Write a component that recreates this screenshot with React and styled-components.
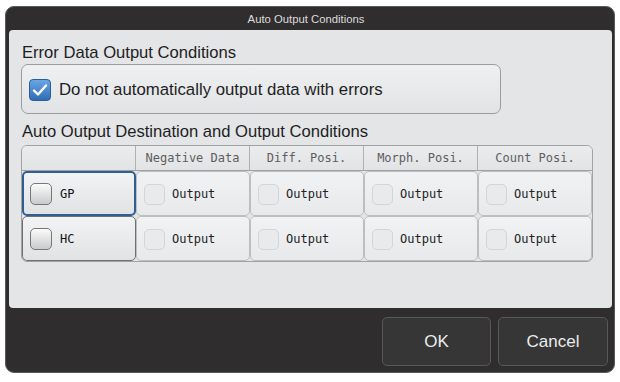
import React from 'react'
import styled, { createGlobalStyle } from 'styled-components'

const GlobalStyle = createGlobalStyle`
  html, body {
    margin: 0;
    padding: 0;
    background: #ffffff;
  }
  body {
    font-family: "Liberation Sans", Arial, sans-serif;
  }
`

const Dialog = styled.div`
  box-sizing: border-box;
  margin: 6px 0 0 5px;
  width: 610px;
  height: 367px;
  background: #2f2d2e;
  border: 1px solid #5a5a5a;
  border-radius: 9px;
  display: flex;
  flex-direction: column;
  overflow: hidden;
`

const TitleBar = styled.div`
  height: 23px;
  flex: none;
  display: flex;
  align-items: center;
  justify-content: center;
  padding-right: 8px;
  color: #dcdcdc;
  font-size: 11.3px;
`

const Panel = styled.div`
  box-sizing: border-box;
  height: 278px;
  flex: none;
  margin: 0 2px 0 3px;
  padding: 14px 0 0 12px;
  background: #e4e5e7;
  border-radius: 4px;
`

const Heading = styled.h2`
  margin: ${p => p.$top || 0}px 0 0 1px;
  font-size: 16.6px;
  line-height: 18px;
  font-weight: normal;
  color: #1e1e1e;
`

const OptionBox = styled.div`
  box-sizing: border-box;
  margin-top: 2px;
  width: 480px;
  height: 50px;
  display: flex;
  align-items: center;
  gap: 8px;
  padding: 2px 0 0 7px;
  border: 1px solid #9c9c9c;
  border-radius: 7px;
  background: linear-gradient(#eef0f2, #e1e3e5);
  font-size: 16.8px;
  color: #1e1e1e;
`

const Checked = styled.span`
  box-sizing: border-box;
  width: 22px;
  height: 22px;
  display: flex;
  align-items: center;
  justify-content: center;
  border: 1px solid #2b5c93;
  border-radius: 4px;
  background: linear-gradient(#6aa6e6, #2f6db3);
`

const Box = styled.span`
  box-sizing: border-box;
  flex: none;
  width: ${p => (p.$disabled ? 21 : 22)}px;
  height: ${p => (p.$disabled ? 21 : 22)}px;
  border-radius: 5px;
  border: 1px solid ${p => (p.$disabled ? '#d4d5d6' : '#777777')};
  background: ${p =>
    p.$disabled ? '#e9eaeb' : 'linear-gradient(#fbfbfb, #c9cacb)'};
`

const Table = styled.div`
  box-sizing: border-box;
  margin-top: 4px;
  width: 572px;
  border: 1px solid #a2a2a2;
  border-radius: 6px;
  overflow: hidden;
  display: grid;
  grid-template-columns: repeat(5, 1fr);
  grid-template-rows: 25px 45px 45px;
  font-family: "DejaVu Sans Mono", "Liberation Mono", monospace;
  font-size: 12px;
`

const HeadCell = styled.div`
  display: flex;
  align-items: center;
  justify-content: center;
  color: #5e5e5e;
  background: linear-gradient(#ebecee, #e2e3e5);
  border-right: 1px solid #b0b0b0;
  border-bottom: 1px solid #a2a2a2;
  &:nth-child(5) {
    border-right: none;
  }
`

const Cell = styled.div`
  box-sizing: border-box;
  display: flex;
  align-items: center;
  padding-top: 1px;
  gap: ${p => (p.$dest ? 8 : 7)}px;
  color: ${p => (p.$dest ? '#111111' : '#222222')};
  border-radius: 5px;
  border: ${p => (p.$focus ? '2px solid #2d5f95' : `1px solid ${p.$dest ? '#707070' : '#bdbebf'}`)};
  padding-left: ${p => (p.$focus ? 6 : 7)}px;
  background: ${p =>
    p.$dest ? 'linear-gradient(#f2f3f4, #e1e2e4)' : 'linear-gradient(#f1f2f3, #e8e9eb)'};
`

const Footer = styled.div`
  flex: 1;
  display: flex;
  justify-content: flex-end;
  align-items: flex-start;
  gap: 7px;
  padding: 9px 6px 0 0;
`

const Button = styled.button`
  box-sizing: border-box;
  width: ${p => p.$w}px;
  height: 49px;
  background: #363636;
  border: 1px solid #585858;
  border-radius: 5px;
  color: #ececec;
  font-family: "Liberation Sans", Arial, sans-serif;
  font-size: 17px;
  padding: 0;
`

const columns = ['', 'Negative Data', 'Diff. Posi.', 'Morph. Posi.', 'Count Posi.']
const rows = ['GP', 'HC']

export default function App() {
  return (
    <>
      <GlobalStyle />
      <Dialog>
        <TitleBar>Auto Output Conditions</TitleBar>
        <Panel>
          <Heading>Error Data Output Conditions</Heading>
          <OptionBox>
            <Checked>
              <svg width="16" height="14" viewBox="0 0 16 14">
                <path d="M2 7.5 L6 11.5 L14 2.5" fill="none" stroke="#fff" strokeWidth="2.4" strokeLinecap="round" strokeLinejoin="round" />
              </svg>
            </Checked>
            Do not automatically output data with errors
          </OptionBox>
          <Heading $top={9}>Auto Output Destination and Output Conditions</Heading>
          <Table>
            {columns.map((c, i) => (
              <HeadCell key={i}>{c}</HeadCell>
            ))}
            {rows.map((r, ri) => (
              <React.Fragment key={r}>
                <Cell $dest $focus={ri === 0}>
                  <Box />
                  {r}
                </Cell>
                {columns.slice(1).map(c => (
                  <Cell key={c}>
                    <Box $disabled />
                    Output
                  </Cell>
                ))}
              </React.Fragment>
            ))}
          </Table>
        </Panel>
        <Footer>
          <Button $w={109}>OK</Button>
          <Button $w={110}>Cancel</Button>
        </Footer>
      </Dialog>
    </>
  )
}
